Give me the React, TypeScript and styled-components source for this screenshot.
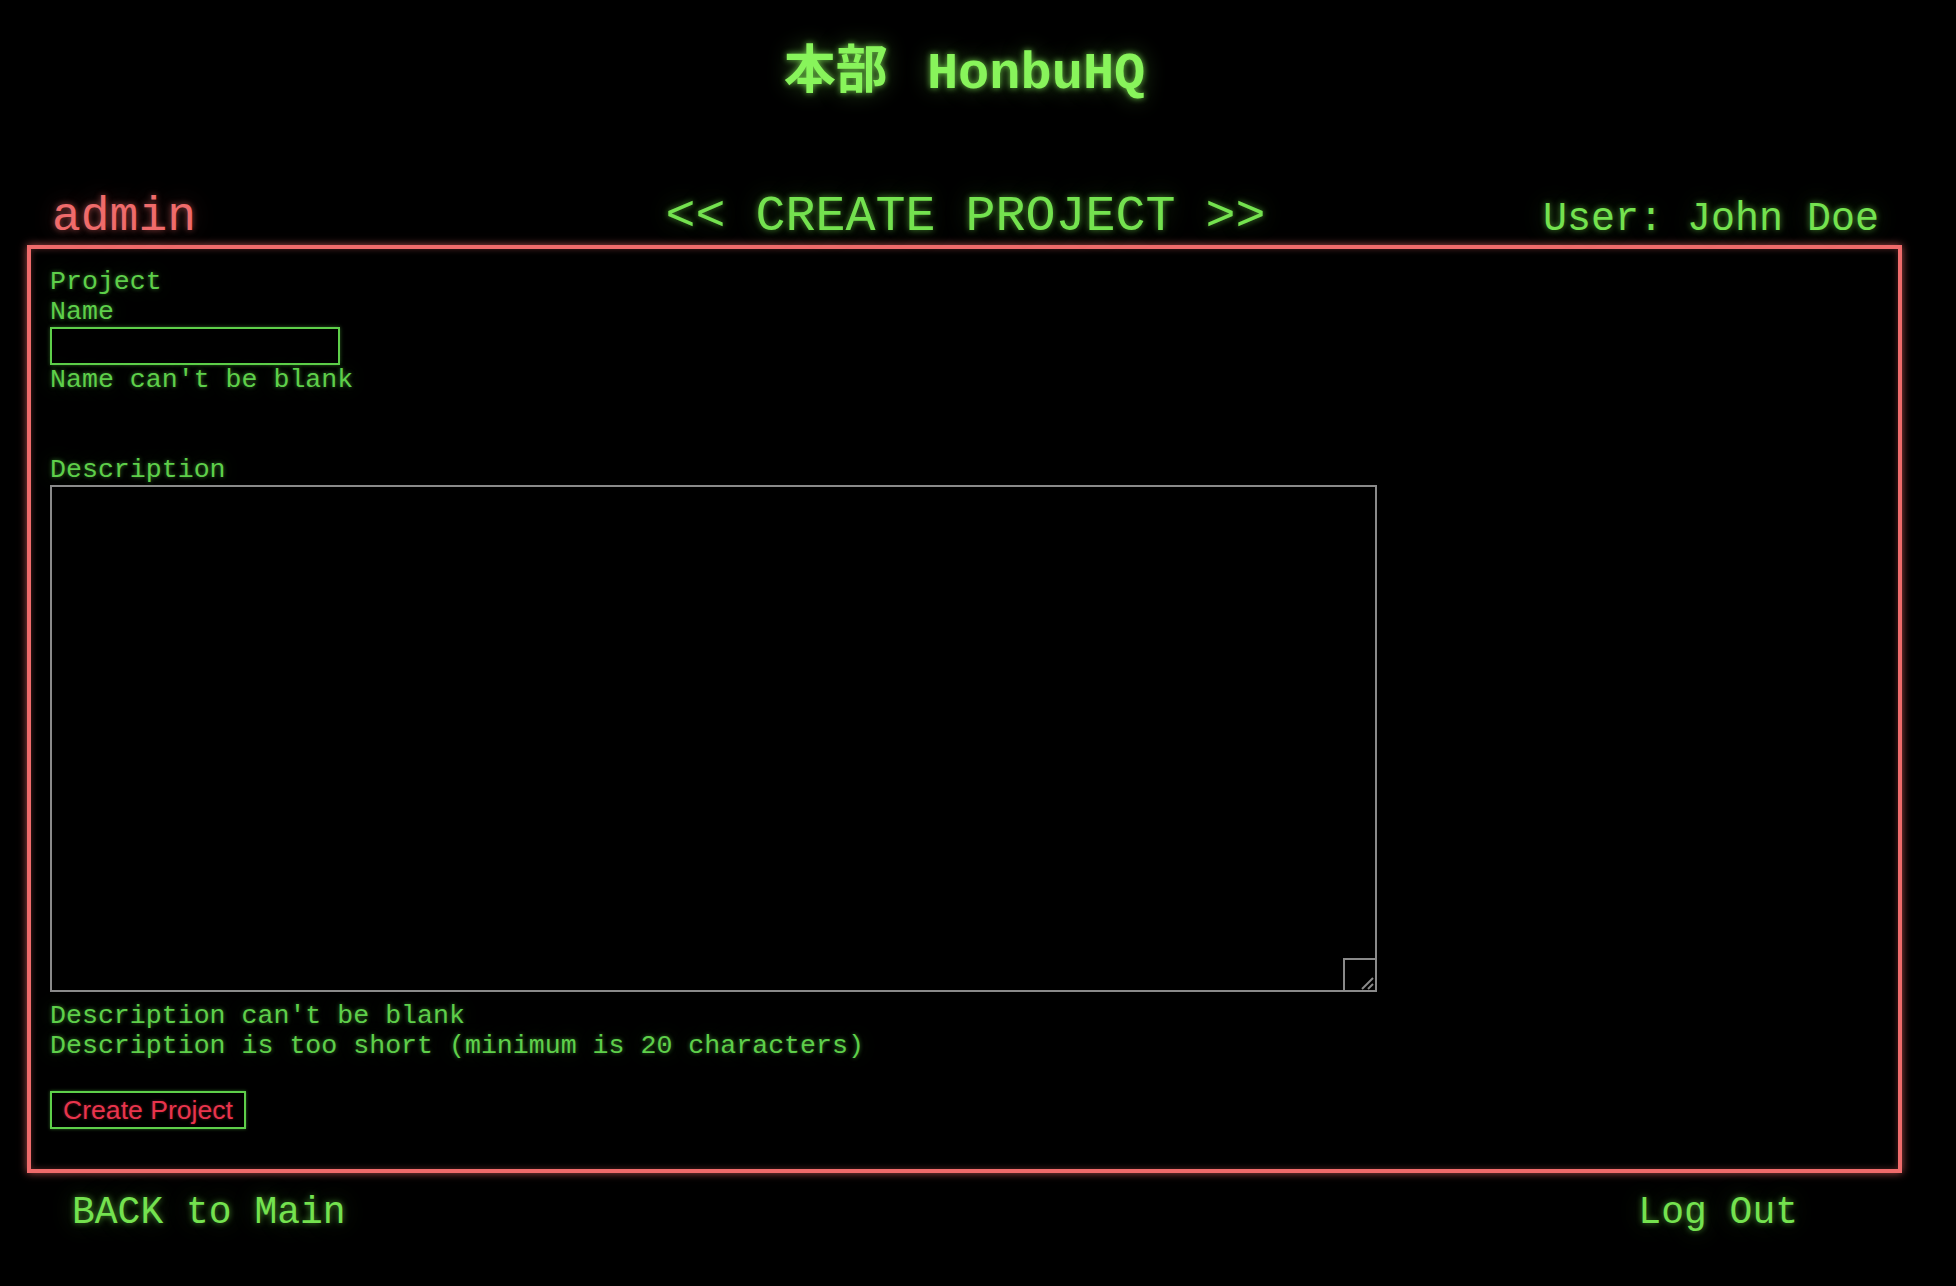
import React from "react";
import styled, { createGlobalStyle } from "styled-components";

const GREEN = "#5ecf4a";
const BRIGHT = "#74e24f";
const RED = "#ef6b6b";
const MONO = `"Liberation Mono", "Courier New", "Noto Sans CJK JP", monospace`;

const GlobalStyle = createGlobalStyle`
  html, body {
    margin: 0;
    padding: 0;
    background: #000;
  }
  body {
    min-height: 1286px;
    font-family: ${MONO};
  }
`;

const Page = styled.div`
  width: 1875px;
  margin-left: 27px;
  padding-top: 36px;
`;

const Title = styled.h1`
  margin: 0;
  height: 66px;
  line-height: 60px;
  text-align: center;
  font-family: ${MONO};
  font-size: 52px;
  font-weight: bold;
  color: #88f45b;
  text-shadow: 0 0 6px rgba(136, 244, 91, 0.75), 0 0 22px rgba(136, 244, 91, 0.35);
`;

const Kanji = styled.span`
  font-family: "Noto Sans CJK JP", sans-serif;
  font-weight: 700;
  margin-right: 8px;
`;

const HeaderRow = styled.div`
  margin-top: 87px;
  height: 56px;
  line-height: 56px;
  padding: 0 23px 0 25px;
  display: grid;
  grid-template-columns: 1fr auto 1fr;
  align-items: baseline;
`;

const Tag = styled.span<{ size: number; color: string; align?: string }>`
  font-family: ${MONO};
  font-size: ${({ size }) => size}px;
  color: ${({ color }) => color};
  text-align: ${({ align }) => align ?? "left"};
  text-shadow: 0 0 6px ${({ color }) => color}99, 0 0 24px ${({ color }) => color}40;
  white-space: pre;
`;

const Panel = styled.div`
  border: 4px solid ${RED};
  box-shadow: 0 0 8px rgba(239, 107, 107, 0.7), inset 0 0 6px rgba(239, 107, 107, 0.35);
  height: 928px;
  box-sizing: border-box;
  padding: 18px 19px 36px;
  display: flex;
  flex-direction: column;
  align-items: flex-start;
`;

const Line = styled.div<{ narrow?: boolean; gapTop?: number }>`
  font-family: ${MONO};
  font-size: 26.6px;
  line-height: 30px;
  color: ${GREEN};
  width: ${({ narrow }) => (narrow ? "8ch" : "auto")};
  margin-top: ${({ gapTop }) => gapTop ?? 0}px;
  text-shadow: 0 0 4px rgba(94, 207, 74, 0.55), 0 0 20px rgba(94, 207, 74, 0.22);
  white-space: pre-wrap;
`;

const NameInput = styled.input`
  display: block;
  box-sizing: border-box;
  width: 290px;
  height: 38px;
  margin: 0;
  background: #000;
  border: 2px solid ${GREEN};
  box-shadow: 0 0 4px rgba(94, 207, 74, 0.45);
  outline: none;
  color: ${GREEN};
  font-family: ${MONO};
  font-size: 26px;
`;

const AreaWrap = styled.div`
  position: relative;
  margin-bottom: 9px;
`;

const DescArea = styled.textarea`
  display: block;
  box-sizing: border-box;
  width: 1327px;
  height: 507px;
  margin: 0;
  background: #000;
  border: 2px solid #8a8a8a;
  outline: none;
  resize: none;
  color: ${GREEN};
  font-family: ${MONO};
  font-size: 26px;
`;

const Grip = styled.svg`
  position: absolute;
  right: 0;
  bottom: 0;
`;

const SubmitButton = styled.button`
  margin-top: 30px;
  box-sizing: border-box;
  height: 38px;
  padding: 0 11px;
  background: #000;
  border: 2px solid ${GREEN};
  color: #e8344c;
  font-family: "Liberation Sans", Arial, sans-serif;
  font-size: 26.6px;
  line-height: 34px;
  text-shadow: 0 0 3px rgba(232, 52, 76, 0.4);
  box-shadow: 0 0 3px rgba(94, 207, 74, 0.5);
  cursor: pointer;
`;

const Footer = styled.div`
  margin-top: 17px;
  height: 46px;
  line-height: 46px;
  padding: 0 104px 0 45px;
  display: flex;
  justify-content: space-between;
  align-items: baseline;
`;

export default function App() {
  return (
    <>
      <GlobalStyle />
      <Page>
        <Title>
          <Kanji>本部</Kanji> HonbuHQ
        </Title>
        <HeaderRow>
          <Tag size={48} color={RED}>admin</Tag>
          <Tag size={50} color={BRIGHT} align="center">{"<< CREATE PROJECT >>"}</Tag>
          <Tag size={40} color={BRIGHT} align="right">User: John Doe</Tag>
        </HeaderRow>
        <Panel>
          <Line narrow>Project Name</Line>
          <NameInput type="text" />
          <Line>Name can't be blank</Line>
          <Line gapTop={60}>Description</Line>
          <AreaWrap>
            <DescArea />
            <Grip width="34" height="34" viewBox="0 0 34 34">
              <rect x="1" y="1" width="32" height="32" fill="#000" stroke="#8a8a8a" strokeWidth="2" />
              <line x1="19" y1="31" x2="30" y2="20" stroke="#8a8a8a" strokeWidth="2" />
              <line x1="25" y1="31" x2="30" y2="26" stroke="#8a8a8a" strokeWidth="2" />
            </Grip>
          </AreaWrap>
          <Line>Description can't be blank</Line>
          <Line>Description is too short (minimum is 20 characters)</Line>
          <SubmitButton type="button">Create Project</SubmitButton>
        </Panel>
        <Footer>
          <Tag size={38} color={BRIGHT}>BACK to Main</Tag>
          <Tag size={38} color={BRIGHT}>Log Out</Tag>
        </Footer>
      </Page>
    </>
  );
}
